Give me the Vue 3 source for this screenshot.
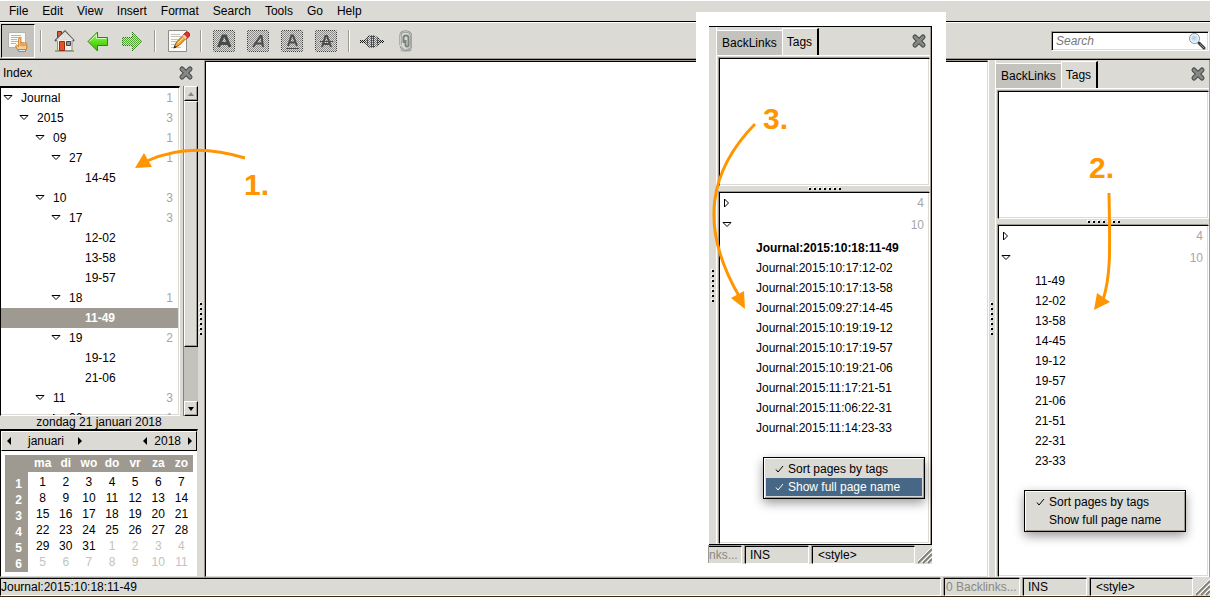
<script setup>
import { reactive, ref } from 'vue'

const menus = ['File', 'Edit', 'View', 'Insert', 'Format', 'Search', 'Tools', 'Go', 'Help']

const tree = [
  { label: 'Journal', level: 0, count: 1, open: true },
  { label: '2015', level: 1, count: 3, open: true },
  { label: '09', level: 2, count: 1, open: true },
  { label: '27', level: 3, count: 1, open: true },
  { label: '14-45', level: 4 },
  { label: '10', level: 2, count: 3, open: true },
  { label: '17', level: 3, count: 3, open: true },
  { label: '12-02', level: 4 },
  { label: '13-58', level: 4 },
  { label: '19-57', level: 4 },
  { label: '18', level: 3, count: 1, open: true },
  { label: '11-49', level: 4, current: true },
  { label: '19', level: 3, count: 2, open: true },
  { label: '19-12', level: 4 },
  { label: '21-06', level: 4 },
  { label: '11', level: 2, count: 3, open: true },
  { label: '06', level: 3, count: 1, open: false }
]

const weekdays = ['ma', 'di', 'wo', 'do', 'vr', 'za', 'zo']
const weeks = Array.from({ length: 6 }, (_, w) =>
  Array.from({ length: 7 }, (_, d) => {
    const n = w * 7 + d + 1
    return n > 31 ? { day: n - 31, other: true } : { day: n, other: false }
  })
)

const panels = reactive([
  {
    id: 'docked',
    floating: false,
    fullNames: false,
    pages: ['11-49', '12-02', '13-58', '14-45', '19-12', '19-57', '21-06', '21-51', '22-31', '23-33']
  },
  {
    id: 'floating',
    floating: true,
    fullNames: true,
    pages: [
      'Journal:2015:10:18:11-49',
      'Journal:2015:10:17:12-02',
      'Journal:2015:10:17:13-58',
      'Journal:2015:09:27:14-45',
      'Journal:2015:10:19:19-12',
      'Journal:2015:10:17:19-57',
      'Journal:2015:10:19:21-06',
      'Journal:2015:11:17:21-51',
      'Journal:2015:11:06:22-31',
      'Journal:2015:11:14:23-33'
    ]
  }
])

const query = ref('')
const text = ref('')
</script>

<template>
  <div class="window">
    <svg class="defs" aria-hidden="true">
      <defs>
        <pattern id="dither" width="2" height="2" patternUnits="userSpaceOnUse">
          <rect width="1" height="1" fill="#dbdad5" />
          <rect x="1" y="1" width="1" height="1" fill="#dbdad5" />
        </pattern>
        <linearGradient id="green" x1="0" y1="0" x2="0" y2="1">
          <stop offset="0" stop-color="#b4f58a" />
          <stop offset="0.5" stop-color="#5fe01f" />
          <stop offset="1" stop-color="#35b800" />
        </linearGradient>
        <g id="cross">
          <path d="M4 4 L12 12 M12 4 L4 12" stroke="#464a48" stroke-width="5" stroke-linecap="round" />
          <path d="M4 4 L12 12 M12 4 L4 12" stroke="#858986" stroke-width="3" stroke-linecap="round" />
        </g>
        <g id="plate">
          <rect x="1.500" y="1.500" width="21" height="21" rx="1" fill="#8c8c8a" stroke="#3c3c3c" />
          <rect width="24" height="24" fill="url(#dither)" />
        </g>
      </defs>
    </svg>

    <nav class="menubar" aria-label="Main menu">
      <button v-for="m in menus" :key="m" type="button">{{ m }}</button>
    </nav>

    <div class="toolbar">
      <button class="tool pressed" type="button" aria-label="Toggle index">
        <svg width="24" height="24" viewBox="0 0 24 24">
          <path d="M2.500 3.500h17v15h-17z" fill="#fafaf8" stroke="#b4b3ac" />
          <path d="M5 6.500h10M5 8.500h11M5 10.500h6M5 12.500h7M5 14.500h5" stroke="#b4b6b2" />
          <path d="M12 21.500l-2.500-4.500 1.200-1 2 1.700V9.500q1.200-1.400 2.200 0v4.500q1-1.200 2 0 1-1.100 2 .2 1-.9 1.900.4v4.400l-1.200 3z" fill="#fbcf91" stroke="#c87c25" />
          <path d="M15 14v3M17 14.500v3M19 15v2" stroke="#c87c25" />
          <path d="M12.500 20.500h7v2h-7z" fill="#d8e8f6" stroke="#6d96c2" />
        </svg>
      </button>
      <span class="sep"></span>
      <button class="tool" type="button" aria-label="Home">
        <svg width="24" height="24" viewBox="0 0 24 24">
          <path d="M3 22h19" stroke="#8abf45" stroke-width="2" />
          <path d="M5.500 2.500h4v7h-4z" fill="#dc5a35" stroke="#8c2b11" />
          <path d="M5.500 11l7.500-8 7 8v10.500h-14.500z" fill="#f2f1ee" stroke="#8c8f8a" />
          <path d="M3 12L13 2.500 22 12" fill="none" stroke="#555753" stroke-width="2" />
          <path d="M5 11.500L13 4 20.500 11.500" fill="none" stroke="#dfe1dc" stroke-width="2" />
          <path d="M9 11v-1M11 11V8M13 11V6M15 11V8M17 11v-1" stroke="#c9cbc7" />
          <path d="M7.500 12.500h5v9h-5z" fill="#e4512d" stroke="#9e260b" />
          <path d="M14.500 12.500h4v4h-4z" fill="#8f9a9f" stroke="#444642" />
        </svg>
      </button>
      <button class="tool" type="button" aria-label="Back">
        <svg width="24" height="24" viewBox="0 0 24 24">
          <path d="M2 12.500L11.500 3v5.500h10v8h-10V22z" fill="url(#green)" stroke="#2d8a05" stroke-linejoin="round" />
          <path d="M3.500 12.500L10.500 5.500v4h10" fill="none" stroke="#caffac" />
        </svg>
      </button>
      <button class="tool" type="button" aria-label="Forward" disabled>
        <svg width="24" height="24" viewBox="0 0 24 24">
          <path d="M22 12.500L12.500 3v5.500h-10v8h10V22z" fill="#52a332" stroke="#246f10" />
          <rect width="24" height="24" fill="url(#dither)" />
        </svg>
      </button>
      <span class="sep"></span>
      <button class="tool" type="button" aria-label="Edit page">
        <svg width="24" height="24" viewBox="0 0 24 24">
          <path d="M2.500 1.500h18v21h-18z" fill="#fbfbf9" stroke="#8b8d88" />
          <path d="M5 5.500h9M5 7.500h10M5 10.500h7M5 12.500h5M5 15.500h4M5 18.500h10" stroke="#c5c6c3" />
          <path d="M8 18.500l2.500-5.500L18 5.500l3 3-8 8z" fill="#fca928" stroke="#9c5300" />
          <path d="M17.500 5.500l2-2q1.500-1.500 3.500.5t0 3.500l-2 2z" fill="#e23127" stroke="#b81c15" />
          <path d="M16.500 7l3 3 1.500-1.500-3-3z" fill="#d5dada" />
          <path d="M12 14l5-5" stroke="#ffe094" />
          <path d="M7.500 19.500l1-3 2 2z" fill="#342719" />
        </svg>
      </button>
      <span class="sep"></span>
      <button class="tool" type="button" aria-label="Bold" disabled>
        <svg width="24" height="24" viewBox="0 0 24 24">
          <use href="#plate" />
          <path d="M6.500 18L11 7h2.500L18 18M8 14.500h8" fill="none" stroke="#494b49" stroke-width="3" />
        </svg>
      </button>
      <button class="tool" type="button" aria-label="Italic" disabled>
        <svg width="24" height="24" viewBox="0 0 24 24">
          <use href="#plate" />
          <path d="M7 18L14.500 7h1L17 18M10 14.500h7" fill="none" stroke="#4c4e4c" stroke-width="2" />
        </svg>
      </button>
      <button class="tool" type="button" aria-label="Underline" disabled>
        <svg width="24" height="24" viewBox="0 0 24 24">
          <use href="#plate" />
          <path d="M8 17L11.500 6.500h1.500L17 17M9 13.500h7" fill="none" stroke="#4c4e4c" stroke-width="2" />
          <path d="M6 19.500h13" stroke="#4c4e4c" />
        </svg>
      </button>
      <button class="tool" type="button" aria-label="Strikethrough" disabled>
        <svg width="24" height="24" viewBox="0 0 24 24">
          <use href="#plate" />
          <path d="M8 18L11.500 7h1.500L17 18M9 15h7" fill="none" stroke="#4c4e4c" stroke-width="2" />
          <path d="M6 12.500h13" stroke="#4c4e4c" />
        </svg>
      </button>
      <span class="sep"></span>
      <button class="tool" type="button" aria-label="Insert link" disabled>
        <svg width="24" height="24" viewBox="0 0 24 24">
          <path d="M0 11h6v3H0zM18 11h6v3h-6z" fill="#111" />
          <path d="M5 10l4-3h6l4 3v5l-4 3H9l-4-3z" fill="#777" stroke="#111" />
          <rect width="24" height="24" fill="url(#dither)" />
          <path d="M7.500 9.500v6M11.500 7v11M13.500 7v11M17.500 9.500v6" stroke="#4c4e4b" />
        </svg>
      </button>
      <button class="tool" type="button" aria-label="Attach file">
        <svg width="24" height="24" viewBox="0 0 24 24" fill="none">
          <ellipse cx="12" cy="21.500" rx="6" ry="1.500" fill="#b9bab5" />
          <path d="M9.500 14V8.500q0-2 2.500-2t2.500 2V16q0 1.500-1.500 1.500T11.500 16v-5M6.500 16V6.500q0-4 5-4t5.500 4V17q0 4-4.500 4T6.500 17" stroke="#7b837e" stroke-width="2" />
          <path d="M6.500 16V6.500q0-4 5-4t5.500 4V17q0 4-4.500 4T6.500 17" stroke="#c9cdca" />
        </svg>
      </button>
      <label class="search">
        <input v-model="query" type="text" placeholder="Search" aria-label="Search" />
        <svg width="18" height="18" viewBox="0 0 18 18">
          <path d="M11 11l5 5" stroke="#3b3d3a" stroke-width="3" stroke-linecap="round" />
          <path d="M12 12l4 4" stroke="#8b8e89" />
          <circle cx="6.500" cy="6.500" r="5" fill="#d5e5f3" stroke="#8d918c" />
          <circle cx="6.500" cy="6.500" r="4" fill="none" stroke="#f5f7f8" />
          <circle cx="6" cy="6" r="2" fill="#b9d3ed" />
        </svg>
      </label>
    </div>

    <div class="main">
      <aside class="side">
        <header class="side-head">
          <span>Index</span>
          <button class="close" type="button" aria-label="Close index">
            <svg width="16" height="16" viewBox="0 0 16 16"><use href="#cross" /></svg>
          </button>
        </header>
        <div class="tree-wrap">
          <ul class="tree">
            <li v-for="(n, i) in tree" :key="i" :class="['lvl' + n.level, { current: n.current }]">
              <button v-if="n.open !== undefined" class="expander" type="button" :aria-label="'Toggle ' + n.label">
                <svg width="10" height="10" viewBox="0 0 10 10">
                  <path :d="n.open ? 'M1 2.500h8L5 6.500z' : 'M2.500 1v8l4-4z'" fill="#fff" stroke="#000" />
                </svg>
              </button>
              <span v-else class="expander"></span>
              <span class="name">{{ n.label }}</span>
              <span class="count">{{ n.count }}</span>
            </li>
          </ul>
          <div class="scroll">
            <button type="button" aria-label="Scroll up">
              <svg width="8" height="8" viewBox="0 0 8 8"><path d="M1 6h6L4 2z" fill="#8a8880" /></svg>
            </button>
            <div class="thumb"></div>
            <div class="trough"></div>
            <button type="button" aria-label="Scroll down">
              <svg width="8" height="8" viewBox="0 0 8 8"><path d="M1 2h6L4 6z" fill="#000" /></svg>
            </button>
          </div>
        </div>
        <div class="date">zondag 21 januari 2018</div>
        <div class="calendar">
          <div class="cal-head">
            <button type="button" aria-label="Previous month">
              <svg width="6" height="8" viewBox="0 0 6 8"><path d="M5 0v8L1 4z" /></svg>
            </button>
            <span class="month">januari</span>
            <button type="button" aria-label="Next month">
              <svg width="6" height="8" viewBox="0 0 6 8"><path d="M1 0v8l4-4z" /></svg>
            </button>
            <button class="push" type="button" aria-label="Previous year">
              <svg width="6" height="8" viewBox="0 0 6 8"><path d="M5 0v8L1 4z" /></svg>
            </button>
            <span>2018</span>
            <button type="button" aria-label="Next year">
              <svg width="6" height="8" viewBox="0 0 6 8"><path d="M1 0v8l4-4z" /></svg>
            </button>
          </div>
          <table>
            <thead>
              <tr>
                <td class="corner"></td>
                <th v-for="d in weekdays" :key="d" scope="col">{{ d }}</th>
              </tr>
            </thead>
            <tbody>
              <tr v-for="(w, i) in weeks" :key="i">
                <th scope="row"><span>{{ i + 1 }}</span></th>
                <td v-for="(d, j) in w" :key="j" :class="{ other: d.other }">{{ d.day }}</td>
              </tr>
            </tbody>
          </table>
        </div>
      </aside>
      <div class="grip-v"><i v-for="k in 7" :key="k"></i></div>
      <textarea v-model="text" class="editor" aria-label="Page text"></textarea>

      <section v-for="p in panels" :key="p.id" :class="['dock', { floating: p.floating }]">
        <div class="dock-row">
          <div class="grip-v"><i v-for="k in 7" :key="k"></i></div>
          <div class="panel">
            <header class="tabs">
              <button class="tab" type="button">BackLinks</button>
              <button class="tab active" type="button">Tags</button>
              <button class="close" type="button" aria-label="Close panel">
                <svg width="16" height="16" viewBox="0 0 16 16"><use href="#cross" /></svg>
              </button>
            </header>
            <div class="cloud"></div>
            <div class="grip-h"><i v-for="k in 7" :key="k"></i></div>
            <div class="tags">
              <div class="tag">
                <button class="expander" type="button" aria-label="Expand tag">
                  <svg width="10" height="10" viewBox="0 0 10 10"><path d="M2.500 1v8l4-4z" fill="#fff" stroke="#000" /></svg>
                </button>
                <span class="count">4</span>
              </div>
              <div class="tag">
                <button class="expander" type="button" aria-label="Collapse tag">
                  <svg width="10" height="10" viewBox="0 0 10 10"><path d="M1 2.500h8L5 6.500z" fill="#fff" stroke="#000" /></svg>
                </button>
                <span class="count">10</span>
              </div>
              <ul class="pages">
                <li v-for="(name, i) in p.pages" :key="name" :class="{ bold: p.fullNames && i === 0 }">{{ name }}</li>
              </ul>
              <div class="popup" role="menu">
                <button type="button" role="menuitemcheckbox" aria-checked="true">
                  <svg width="10" height="10" viewBox="0 0 10 10"><path d="M1 5.500l2 2.500 5-6" fill="none" stroke="currentColor" /></svg>
                  <span>Sort pages by tags</span>
                </button>
                <button type="button" role="menuitemcheckbox" :aria-checked="p.fullNames" :class="{ hot: p.fullNames }">
                  <svg width="10" height="10" viewBox="0 0 10 10"><path v-if="p.fullNames" d="M1 5.500l2 2.500 5-6" fill="none" stroke="currentColor" /></svg>
                  <span>Show full page name</span>
                </button>
              </div>
            </div>
          </div>
        </div>
        <footer v-if="p.floating" class="status">
          <button class="cell links" type="button" disabled>nks...</button>
          <span class="cell mode">INS</span>
          <span class="cell style">&lt;style&gt;</span>
          <svg class="resize" width="14" height="18" viewBox="0 0 14 18">
            <path d="M0 17L14 3M5 17l9-9M10 17l4-4" stroke="#858279" stroke-width="2" />
            <path d="M-1 16L14 1M4 16L14 6M9 16l5-5" stroke="#fff" />
          </svg>
        </footer>
      </section>
    </div>

    <footer class="status">
      <span class="cell path">Journal:2015:10:18:11-49</span>
      <button class="cell links" type="button" disabled>0 Backlinks...</button>
      <span class="cell mode">INS</span>
      <span class="cell style">&lt;style&gt;</span>
      <svg class="resize" width="14" height="18" viewBox="0 0 14 18">
        <path d="M0 17L14 3M5 17l9-9M10 17l4-4" stroke="#858279" stroke-width="2" />
        <path d="M-1 16L14 1M4 16L14 6M9 16l5-5" stroke="#fff" />
      </svg>
    </footer>

    <svg class="note note-1" width="145" height="60" viewBox="130 140 145 60">
      <path class="line" d="M245 158Q190 141 147 161" />
      <path class="head" d="M135 168l9-15 8 14z" />
      <text x="244" y="195">1.</text>
    </svg>
    <svg class="note note-2" width="40" height="165" viewBox="1080 150 40 165">
      <path class="line" d="M1109 193C1110 250 1111 275 1103 300" />
      <path class="head" d="M1094 310l3-17 13 9z" />
      <text x="1089" y="178">2.</text>
    </svg>
    <svg class="note note-3" width="90" height="215" viewBox="705 100 90 215">
      <path class="line" d="M755 124C710 170 698 225 739 296" />
      <path class="head" d="M745 309l-14-11 13-7z" />
      <text x="763" y="129">3.</text>
    </svg>
  </div>
</template>

<style>
body {
  margin: 0;
}
</style>

<style scoped>
* {
  box-sizing: border-box;
}
.window {
  position: relative;
  display: flex;
  flex-direction: column;
  height: 100vh;
  overflow: hidden;
  background: #dbdad5;
  border-bottom: 1px solid #3a2a10;
  font: 12px/16px "Liberation Sans", Arial, sans-serif;
  color: #000;
}
.defs {
  position: absolute;
  width: 0;
  height: 0;
}
button {
  margin: 0;
  padding: 0;
  border: 0;
  background: none;
  font: inherit;
  color: inherit;
}
svg {
  display: block;
}
ul {
  margin: 0;
  padding: 0;
  list-style: none;
}

/* menu bar and toolbar */
.menubar {
  display: flex;
  height: 22px;
  padding-left: 2px;
  border-top: 1px solid #fff;
  border-bottom: 1px solid #000;
}
.menubar button {
  padding: 0 7px;
}
.toolbar {
  display: flex;
  align-items: center;
  height: 38px;
  padding: 0 1px;
  border-top: 1px solid #fff;
  border-bottom: 1px solid #000;
  box-shadow: inset 0 -1px #9e9a91;
}
.tool {
  display: flex;
  align-items: center;
  justify-content: center;
  width: 34px;
  height: 34px;
}
.pressed {
  background: #c4c2bd;
  border: 1px solid #000;
  border-right-color: #fff;
  border-bottom-color: #fff;
}
.sep {
  width: 2px;
  height: 22px;
  margin: 0 5px;
  border-left: 1px solid #9e9a91;
  border-right: 1px solid #fff;
}
.search {
  display: flex;
  align-items: center;
  width: 158px;
  height: 20px;
  margin-left: auto;
  padding: 0 2px;
  background: #fff;
  border: 1px solid #9e9a91;
  border-right-color: #fff;
  border-bottom-color: #fff;
  box-shadow: inset 1px 1px #000, inset -1px -1px #dbdad5;
}
.search input {
  flex: 1;
  min-width: 0;
  padding: 0 2px;
  border: 0;
  outline: 0;
  background: none;
  font: italic 12px/16px "Liberation Sans", Arial, sans-serif;
}
.search input::placeholder {
  color: #777;
  opacity: 1;
}

/* body */
.main {
  display: flex;
  flex: 1;
  min-height: 0;
}
.side {
  display: flex;
  flex-direction: column;
  width: 198px;
}
.side-head {
  display: flex;
  align-items: center;
  justify-content: space-between;
  height: 26px;
  padding: 0 4px 0 3px;
}
.tree-wrap {
  display: flex;
  flex: 1;
  gap: 3px;
  min-height: 0;
}
.tree {
  flex: 1;
  overflow: hidden;
  background: #fff;
  border: 1px solid #000;
  border-top: 2px solid #000;
  border-right-color: #fff;
  border-bottom-color: #fff;
  box-shadow: inset -1px -1px #dbdad5;
}
.tree li {
  display: flex;
  align-items: center;
  height: 20px;
  margin-right: 1px;
  padding-right: 5px;
}
.expander {
  width: 10px;
  height: 10px;
}
.name {
  margin-left: 8px;
}
.count {
  margin-left: auto;
  color: #a6a6a6;
}
.lvl0 { padding-left: 2px; }
.lvl1 { padding-left: 18px; }
.lvl2 { padding-left: 34px; }
.lvl3 { padding-left: 50px; }
.lvl4 { padding-left: 66px; }
.current {
  background: #9e9a91;
  color: #fff;
  font-weight: bold;
}
.scroll {
  display: flex;
  flex-direction: column;
  width: 15px;
  background: #c4c2bd;
  border-left: 1px solid #858279;
}
.scroll button,
.thumb {
  background: #dbdad5;
  border: 1px solid #fff;
  border-right-color: #000;
  border-bottom-color: #000;
  box-shadow: inset -1px -1px #9e9a91;
}
.scroll button {
  display: flex;
  align-items: center;
  justify-content: center;
  height: 15px;
}
.thumb {
  flex: 246;
}
.trough {
  flex: 55;
}
.date {
  height: 13px;
  line-height: 13px;
  text-align: center;
}
.calendar {
  background: #fff;
  border: 1px solid #000;
  border-top-width: 2px;
  border-right-color: #dbdad5;
  border-bottom-color: #dbdad5;
}
.cal-head {
  display: flex;
  align-items: center;
  height: 20px;
  padding: 0 3px 0 4px;
  background: #dbdad5;
  border: 1px solid #fff;
  border-right-color: #000;
  border-bottom-color: #000;
}
.month {
  width: 54px;
  text-align: center;
  margin: 0 4px 0 7px;
}
.push {
  margin-left: auto;
  margin-right: 6px;
}
.cal-head span + button:last-child {
  margin-left: 6px;
}
table {
  margin: 4px;
  border-collapse: separate;
  border-spacing: 0;
  table-layout: fixed;
  width: 188px;
  text-align: center;
}
td,
th {
  width: 23px;
  height: 16px;
  padding: 0;
  line-height: 16px;
  vertical-align: top;
}
thead th,
.corner {
  height: 19px;
  line-height: 17px;
  background: #9e9a91;
  color: #fff;
  border-bottom: 2px solid #fff;
}
.corner {
  width: 26px;
}
tbody th {
  line-height: 12px;
  color: #fff;
}
tbody th span {
  display: block;
  height: 18px;
  margin: -2px 3px -2px 0;
  padding: 6px 0 0 4px;
  background: #9e9a91;
}
tbody tr:last-child > * {
  height: 18px;
}
tbody tr:last-child span {
  height: 20px;
}
.other {
  color: #c4c2bd;
}
.grip-v {
  display: flex;
  flex-direction: column;
  align-items: center;
  justify-content: center;
  gap: 3px;
  width: 7px;
  border-right: 1px solid #9e9a91;
}
.grip-v i,
.grip-h i {
  width: 2px;
  height: 2px;
  background: #000;
  box-shadow: -1px -1px #fff;
}
.editor {
  flex: 1;
  min-width: 0;
  margin: 1px 0 0;
  padding: 4px;
  border: 1px solid #000;
  border-right: 1px solid #dbdad5;
  border-bottom: 1px solid #dbdad5;
  outline: 0;
  resize: none;
  background: #fff;
  box-shadow: 0 -1px #9e9a91;
  font: inherit;
}

/* tag panels */
.dock {
  display: flex;
  flex-direction: column;
  width: 222px;
}
.dock-row {
  display: flex;
  flex: 1;
  min-height: 0;
}
.dock .grip-v {
  width: 8px;
  border-right: 1px solid #fff;
  border-left: 1px solid #fff;
}
.floating {
  position: absolute;
  top: 12px;
  right: 264px;
  bottom: 32px;
  width: 250px;
  padding: 14px 14px 0 13px;
  background: #fff;
}
.floating .dock-row {
  background: #dbdad5;
  border-top: 1px solid #000;
  border-right: 1px solid #000;
  border-bottom: 1px solid #000;
}
.floating .dock-row .grip-v {
  border-left-color: #dbdad5;
}
.panel {
  display: flex;
  flex: 1;
  flex-direction: column;
  min-width: 0;
  border-right: 1px solid #9e9a91;
}
.tabs {
  display: flex;
  align-items: flex-end;
  height: 29px;
  border-bottom: 1px solid #fff;
}
.tab {
  height: 25px;
  padding: 0 5px;
  background: #c4c2bd;
  border-top: 1px solid #fff;
}
.tab.active {
  height: 27px;
  padding: 0 5px 0 4px;
  background: #dbdad5;
  border-left: 1px solid #fff;
  border-right: 2px solid #000;
}
.tabs .close {
  align-self: center;
  margin-left: auto;
  margin-right: 3px;
}
.cloud,
.tags {
  margin-left: 2px;
  background: #fff;
  border: 1px solid #000;
  border-right-color: #fff;
  border-bottom-color: #fff;
  box-shadow: inset -1px -1px #dbdad5, -1px -1px #9e9a91;
}
.cloud {
  height: 128px;
  margin-top: 2px;
}
.grip-h {
  display: flex;
  align-items: center;
  justify-content: center;
  gap: 3px;
  height: 6px;
  padding-left: 2px;
}
.tags {
  position: relative;
  flex: 1;
  padding-right: 5px;
}
.tag {
  display: flex;
  align-items: center;
  height: 22px;
  margin-top: -1px;
  padding-left: 2px;
}
.tag + .tag {
  margin-top: 0;
}
.pages {
  padding: 2px 0 0 36px;
}
.pages li {
  height: 20px;
  line-height: 20px;
}
.bold {
  font-weight: bold;
}
.popup {
  position: absolute;
  top: 264px;
  right: 22px;
  width: 162px;
  padding: 2px;
  background: #dbdad5;
  border: 1px solid #000;
  box-shadow: inset 1px 1px #fff, inset -1px -1px #9e9a91, 0 4px 10px rgba(0, 0, 0, 0.4);
}
.floating .popup {
  right: 4px;
}
.popup button {
  display: flex;
  align-items: center;
  gap: 3px;
  width: 100%;
  height: 18px;
  padding-left: 9px;
}
.popup .hot {
  background: #466886;
  color: #fff;
}

/* status bar */
.status {
  display: flex;
  gap: 3px;
  height: 19px;
  padding-top: 1px;
  background: #dbdad5;
}
.cell {
  padding: 0 4px;
  line-height: 16px;
  text-align: left;
  white-space: nowrap;
  overflow: hidden;
  border: 1px solid #fff;
  border-top-color: #000;
  border-left-color: #000;
  box-shadow: -1px -1px #9e9a91;
}
.path {
  flex: 1;
  padding: 0;
}
.links {
  width: 76px;
  padding: 0 1px;
  color: #8a8880;
}
.floating .links {
  width: 33px;
  padding: 0;
  border-left: 0;
}
.mode {
  width: 64px;
}
.style {
  width: 103px;
  padding-left: 5px;
}
.floating .style {
  flex: 1;
}

/* numbered arrows */
.note {
  position: absolute;
  pointer-events: none;
}
.note-1 {
  left: 130px;
  top: 140px;
}
.note-2 {
  right: 90px;
  top: 150px;
}
.note-3 {
  right: 415px;
  top: 100px;
}
.line {
  fill: none;
  stroke: #ff9500;
  stroke-width: 3;
}
.head {
  fill: #ff9500;
}
.note text {
  fill: #ff9500;
  font: bold 30px "Liberation Sans", Arial, sans-serif;
}
</style>
